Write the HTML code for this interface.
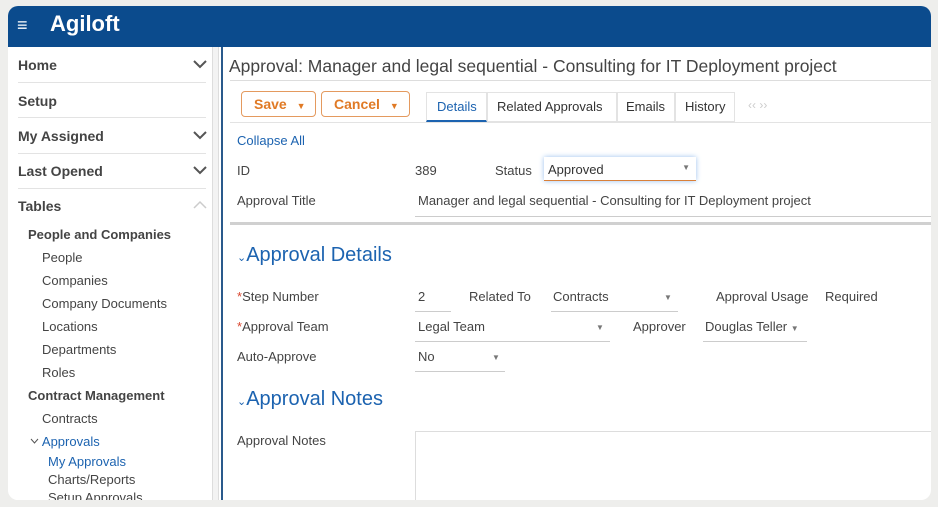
<!DOCTYPE html>
<html><head><style>
*{margin:0;padding:0;box-sizing:border-box}
body{width:938px;height:507px;background:#eeeeec;font-family:"Liberation Sans",sans-serif;position:relative;overflow:hidden;color:#333}
.win{position:absolute;left:8px;top:6px;width:923px;height:494px;background:#fff;border-radius:10px;overflow:hidden}
.hdr{position:absolute;left:0;top:0;width:100%;height:41px;background:#0b4b8d}
.a{position:absolute;white-space:nowrap}
.side{position:absolute;left:0;top:41px;width:204px;height:453px;background:#fff}
.sb{position:absolute;left:204px;top:41px;width:7px;height:453px;background:#f3f3f3;border-left:1px solid #ddd;border-right:1px solid #ddd}
.vl{position:absolute;left:213px;top:41px;width:2px;height:453px;background:#2a5a8c}
.nav{position:absolute;left:10px;width:190px;font-weight:bold;font-size:14px;color:#444}
.hl{position:absolute;left:10px;width:188px;height:1px;background:#e3e3e3}
.chev{position:absolute;right:0;top:1px}
.sub{font-size:13px;color:#444}
.lbl{font-size:13px;color:#444}
.btn{position:absolute;height:26px;border:1px solid #e49a5f;border-radius:4px;color:#e07a25;font-weight:bold;font-size:14px;padding:4px 0 0 12px}
.sec{font-size:20px;color:#1c63b0}
.uline{position:absolute;height:1px;background:#ccc}
</style></head><body>
<div class="win">
<div class="hdr">
<div class="a" style="left:9px;top:9px;color:#fff;font-size:18px">&#8801;</div>
<div class="a" style="left:42px;top:5px;color:#fff;font-size:22px;font-weight:bold">Agiloft</div>
</div>
<div class="side">
<div class="nav" style="top:10px">Home<svg class="chev" width="16" height="12"><polyline points="2,3 8,9 14,3" fill="none" stroke="#555" stroke-width="2"/></svg></div>
<div class="hl" style="top:35px"></div>
<div class="nav" style="top:46px">Setup</div>
<div class="hl" style="top:70px"></div>
<div class="nav" style="top:81px">My Assigned<svg class="chev" width="16" height="12"><polyline points="2,3 8,9 14,3" fill="none" stroke="#555" stroke-width="2"/></svg></div>
<div class="hl" style="top:106px"></div>
<div class="nav" style="top:116px">Last Opened<svg class="chev" width="16" height="12"><polyline points="2,3 8,9 14,3" fill="none" stroke="#555" stroke-width="2"/></svg></div>
<div class="hl" style="top:141px"></div>
<div class="nav" style="top:151px">Tables<svg class="chev" width="16" height="12"><polyline points="2,9 8,3 14,9" fill="none" stroke="#ccc" stroke-width="1.5"/></svg></div>
<div class="a" style="left:20px;top:180px;font-weight:bold;font-size:13px;color:#444">People and Companies</div>
<div class="a sub" style="left:34px;top:203px">People</div>
<div class="a sub" style="left:34px;top:226px">Companies</div>
<div class="a sub" style="left:34px;top:249px">Company Documents</div>
<div class="a sub" style="left:34px;top:272px">Locations</div>
<div class="a sub" style="left:34px;top:295px">Departments</div>
<div class="a sub" style="left:34px;top:318px">Roles</div>
<div class="a" style="left:20px;top:341px;font-weight:bold;font-size:13px;color:#444">Contract Management</div>
<div class="a sub" style="left:34px;top:364px">Contracts</div>
<div class="a sub" style="left:22px;top:387px;color:#1c63b0"><svg width="9" height="8" style="vertical-align:1px"><polyline points="1,2 4.5,6 8,2" fill="none" stroke="#555" stroke-width="1"/></svg> Approvals</div>
<div class="a sub" style="left:40px;top:407px;color:#1c63b0">My Approvals</div>
<div class="a sub" style="left:40px;top:425px">Charts/Reports</div>
<div class="a sub" style="left:40px;top:443px">Setup Approvals</div>
</div>
<div class="sb"></div>
<div class="vl"></div>
<div class="a" style="left:221px;top:50px;font-size:17.5px;color:#444">Approval: Manager and legal sequential - Consulting for IT Deployment project</div>
<div class="a" style="left:222px;top:74px;width:701px;height:1px;background:#ddd"></div>
<div class="a" style="left:222px;top:116px;width:701px;height:1px;background:#e3e3e3"></div>
<div class="btn" style="left:233px;top:85px;width:75px">Save <span style="font-size:9px;margin-left:6px">&#9660;</span></div>
<div class="btn" style="left:313px;top:85px;width:89px">Cancel <span style="font-size:9px;margin-left:6px">&#9660;</span></div>
<div class="a" style="left:418px;top:86px;width:61px;height:30px;border:1px solid #e3e3e3;border-bottom:2px solid #1c63b0;font-size:13px;color:#1c63b0;padding:6px 0 0 10px">Details</div>
<div class="a" style="left:479px;top:86px;width:130px;height:30px;border:1px solid #e3e3e3;font-size:13px;padding:6px 0 0 9px">Related Approvals</div>
<div class="a" style="left:609px;top:86px;width:58px;height:30px;border:1px solid #e3e3e3;font-size:13px;padding:6px 0 0 8px">Emails</div>
<div class="a" style="left:667px;top:86px;width:60px;height:30px;border:1px solid #e3e3e3;font-size:13px;padding:6px 0 0 9px">History</div>
<div class="a" style="left:740px;top:92px;font-size:12px;color:#ccc">&#8249;&#8249; &#8250;&#8250;</div>
<div class="a lbl" style="left:229px;top:127px;color:#1c63b0">Collapse All</div>
<div class="a lbl" style="left:229px;top:157px">ID</div>
<div class="a lbl" style="left:407px;top:157px">389</div>
<div class="a lbl" style="left:487px;top:157px">Status</div>
<div class="a" style="left:536px;top:151px;width:152px;height:24px;background:#fff;box-shadow:0 0 5px #9bc0ef;border-bottom:1px solid #d9803a;font-size:13px;padding:5px 0 0 4px">Approved<span style="position:absolute;right:6px;top:6px;font-size:8px;color:#777">&#9660;</span></div>
<div class="a lbl" style="left:229px;top:187px">Approval Title</div>
<div class="a lbl" style="left:410px;top:187px">Manager and legal sequential - Consulting for IT Deployment project</div>
<div class="uline" style="left:407px;top:210px;width:516px"></div>
<div class="a" style="left:222px;top:216px;width:701px;height:3px;background:#d0d0d0"></div>
<div class="a sec" style="left:229px;top:238px"><span style="font-size:11px">&#8964;</span>Approval Details</div>
<div class="a lbl" style="left:229px;top:283px"><span style="color:#d9462e">*</span>Step Number</div>
<div class="a lbl" style="left:410px;top:283px">2</div>
<div class="uline" style="left:407px;top:305px;width:36px"></div>
<div class="a lbl" style="left:461px;top:283px">Related To</div>
<div class="a lbl" style="left:545px;top:283px">Contracts</div>
<div class="a" style="left:656px;top:287px;font-size:8px;color:#777">&#9660;</div>
<div class="uline" style="left:543px;top:305px;width:127px"></div>
<div class="a lbl" style="left:708px;top:283px">Approval Usage</div>
<div class="a lbl" style="left:817px;top:283px">Required</div>
<div class="a lbl" style="left:229px;top:313px"><span style="color:#d9462e">*</span>Approval Team</div>
<div class="a lbl" style="left:410px;top:313px">Legal Team</div>
<div class="a" style="left:588px;top:317px;font-size:8px;color:#777">&#9660;</div>
<div class="uline" style="left:407px;top:335px;width:195px"></div>
<div class="a lbl" style="left:625px;top:313px">Approver</div>
<div class="a lbl" style="left:697px;top:313px">Douglas Teller <span style="font-size:8px;color:#777">&#9660;</span></div>
<div class="uline" style="left:695px;top:335px;width:104px"></div>
<div class="a lbl" style="left:229px;top:343px">Auto-Approve</div>
<div class="a lbl" style="left:410px;top:343px">No</div>
<div class="a" style="left:484px;top:347px;font-size:8px;color:#777">&#9660;</div>
<div class="uline" style="left:407px;top:365px;width:90px"></div>
<div class="a sec" style="left:229px;top:382px"><span style="font-size:11px">&#8964;</span>Approval Notes</div>
<div class="a lbl" style="left:229px;top:427px">Approval Notes</div>
<div class="a" style="left:407px;top:425px;width:520px;height:80px;border:1px solid #ddd"></div>
</div>
</body></html>
